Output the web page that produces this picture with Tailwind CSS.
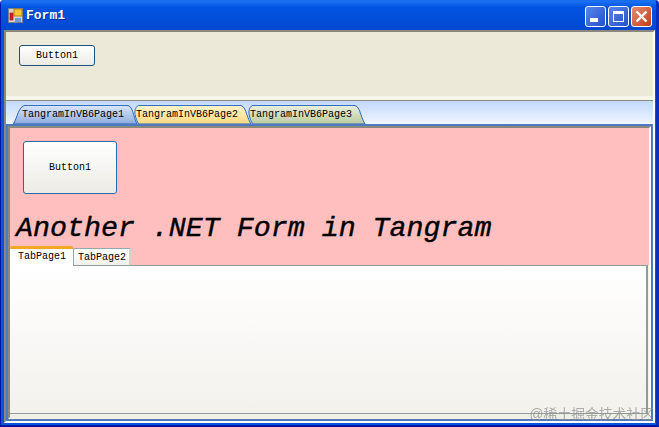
<!DOCTYPE html>
<html lang="en">
  <head>
    <meta charset="UTF-8" />
    <title>Form1</title>
    <script src="https://cdn.jsdelivr.net/npm/@tailwindcss/browser@4"></script>
  </head>
  <body class="bg-white">
    <div class="relative w-[659px] h-[427px] flex flex-col overflow-hidden rounded-t-[4px] bg-[#0855dd] border-l border-l-[#0018a8] border-r-[3px] border-r-[#0a2fbf] border-b-2 border-b-[#001a9e] font-['Liberation_Mono',monospace] text-black">
      <!-- Title bar -->
      <div class="h-[30px] shrink-0 flex items-center pt-[2px] pl-[7px] pr-[4px] bg-gradient-to-b from-[#1a6ff0] from-[5%] via-[#0254e2] via-[25%] to-[#0349d0]">
        <svg class="w-[16px] h-[16px] mr-[2px]" viewBox="0 0 16 16">
          <rect x="0.5" y="0.5" width="14" height="14" fill="#d8d4cc" stroke="#7a8088" />
          <rect x="6" y="1" width="8" height="7" fill="#f8c430" stroke="#a87810" stroke-width="0.8" />
          <rect x="2" y="5" width="3" height="7" fill="#d02818" stroke="#801010" stroke-width="0.6" />
          <rect x="7" y="10" width="6" height="4" fill="#6c9ce0" />
        </svg>
        <span class="text-[13px] font-bold text-white [text-shadow:1px_1px_0_#0a2a90]">Form1</span>
        <div class="ml-auto flex gap-[2px]">
          <div class="w-[21px] h-[21px] rounded-[3px] border border-white bg-gradient-to-br from-[#5a86ec] to-[#2450c8] flex items-end pl-[4px] pb-[4px]">
            <div class="w-[8px] h-[4px] bg-white"></div>
          </div>
          <div class="w-[21px] h-[21px] rounded-[3px] border border-white bg-gradient-to-br from-[#5a86ec] to-[#2450c8] flex items-center justify-center">
            <div class="w-[11px] h-[11px] border border-white border-t-[3px]"></div>
          </div>
          <div class="w-[21px] h-[21px] rounded-[3px] border border-white bg-gradient-to-br from-[#e88a70] to-[#c23a10] flex items-center justify-center">
            <svg class="w-[13px] h-[13px]" viewBox="0 0 13 13"><path d="M1.5 1.5l10 10M11.5 1.5l-10 10" stroke="#fff" stroke-width="2.4" fill="none" /></svg>
          </div>
        </div>
      </div>

      <!-- Client area inside blue frame -->
      <div class="flex-1 min-h-0 flex flex-col ml-[3px] mr-[1px] mb-[2px] border-t-2 border-l-2 border-[#8a887c] border-r-2 border-r-white border-b-2 border-b-white">
        <!-- Top panel -->
        <div class="h-[64px] shrink-0 bg-[#ece9d8] pl-[13px] pt-[13px]">
          <button class="block w-[76px] h-[21px] rounded-[3px] border border-[#1c5180] bg-gradient-to-b from-white to-[#ecebe4] text-[10px]">Button1</button>
        </div>
        <div class="h-[4px] shrink-0 bg-[#f8f6ea]"></div>
        <div class="h-[1px] shrink-0 bg-[#8a887c]"></div>

        <!-- Outer tab control -->
        <div class="flex-1 min-h-0 flex flex-col bg-white">
          <div class="h-[23px] shrink-0 pl-[7px] flex items-end bg-gradient-to-b from-[#c3d9fb] to-[#f0f5fe]">
            <div class="relative w-[125px] h-[19px] shrink-0 pl-[9px] pt-[3px] text-[10px] leading-[14px]">
              <svg class="absolute inset-0 w-full h-full" viewBox="0 0 125 21" preserveAspectRatio="none">
                <defs><linearGradient id="tab1" x1="0" y1="0" x2="0" y2="1"><stop offset="0" stop-color="#dbe7fa" /><stop offset="1" stop-color="#8dabde" /></linearGradient></defs>
                <path d="M0.5 21C4 14 6 1 12 0.5H114C120 0.5 120 12 124 21Z" fill="url(#tab1)" stroke="#2060b8" />
              </svg>
              <span class="relative">TangramInVB6Page1</span>
            </div>
            <div class="relative w-[120px] h-[19px] shrink-0 ml-[-6px] pl-[4px] pt-[3px] text-[10px] leading-[14px]">
              <svg class="absolute inset-0 w-full h-full" viewBox="0 0 120 21" preserveAspectRatio="none">
                <defs><linearGradient id="tab2" x1="0" y1="0" x2="0" y2="1"><stop offset="0" stop-color="#fff3cc" /><stop offset="1" stop-color="#ffda80" /></linearGradient></defs>
                <path d="M6.5 21C4 15 0 6 6 0.5H108C114 0.5 114 12 119 21Z" fill="url(#tab2)" stroke="#2060b8" />
              </svg>
              <span class="relative">TangramInVB6Page2</span>
            </div>
            <div class="relative w-[120px] h-[19px] shrink-0 ml-[-6px] pl-[4px] pt-[3px] text-[10px] leading-[14px]">
              <svg class="absolute inset-0 w-full h-full" viewBox="0 0 120 21" preserveAspectRatio="none">
                <defs><linearGradient id="tab3" x1="0" y1="0" x2="0" y2="1"><stop offset="0" stop-color="#e9efdd" /><stop offset="1" stop-color="#bccb9f" /></linearGradient></defs>
                <path d="M6.5 21C4 15 0 6 6 0.5H108C114 0.5 114 12 119 21Z" fill="url(#tab3)" stroke="#2060b8" />
              </svg>
              <span class="relative">TangramInVB6Page3</span>
            </div>
          </div>

          <!-- Pink tab page -->
          <div class="flex-1 min-h-0 border-2 border-[#4f79c0] flex flex-col">
            <div class="flex-1 min-h-0 flex flex-col border-t-2 border-l-2 border-[#8a887c] border-r-2 border-r-white border-b-2 border-b-[#f0efe6] bg-[#ffbfbf]">
              <div class="h-[118px] shrink-0 pl-[13px] pt-[13px]">
                <button class="block w-[94px] h-[53px] rounded-[3px] border border-[#2a6aa8] bg-gradient-to-b from-white to-[#ecebe4] text-[10px]">Button1</button>
                <div class="ml-[-7px] mt-[18px] text-[28.3px] leading-[32px] italic whitespace-nowrap [-webkit-text-stroke:0.4px_black]">Another .NET Form in Tangram</div>
              </div>
              <!-- Inner tabs -->
              <div class="h-[19px] shrink-0 flex items-end">
                <div class="w-[63px] h-[20px] mb-[-1px] relative bg-white border-t-[3px] border-[#f5a623] rounded-t-[2px] text-[10px] leading-[15px] pl-[8px]">TabPage1</div>
                <div class="w-[59px] h-[17px] bg-gradient-to-b from-white to-[#f2f1ea] border-l border-t border-[#91a7b4] rounded-t-[2px] text-[10px] leading-[18px] pl-[4px] border-r-[3px] border-r-[#d6d3c2]">TabPage2</div>
              </div>
              <!-- Inner tab pane, light edge to the right and below -->
              <div class="flex-1 min-h-0 bg-[#f0efe6] flex flex-col">
                <div class="flex-1 min-h-0 mr-[1px] mb-[3px] border-t border-r-2 border-b border-[#919b9c] bg-gradient-to-b from-white to-[#f3f1ec]"></div>
              </div>
            </div>
          </div>
        </div>
      </div>

      <!-- Watermark -->
      <div class="absolute right-[2px] bottom-[2px] text-[13.8px] leading-[16px] text-[#8f8f8f]/70 blur-[0.3px] font-['Liberation_Sans','Noto_Sans_CJK_SC',sans-serif]">@稀土掘金技术社区</div>
    </div>
  </body>
</html>
